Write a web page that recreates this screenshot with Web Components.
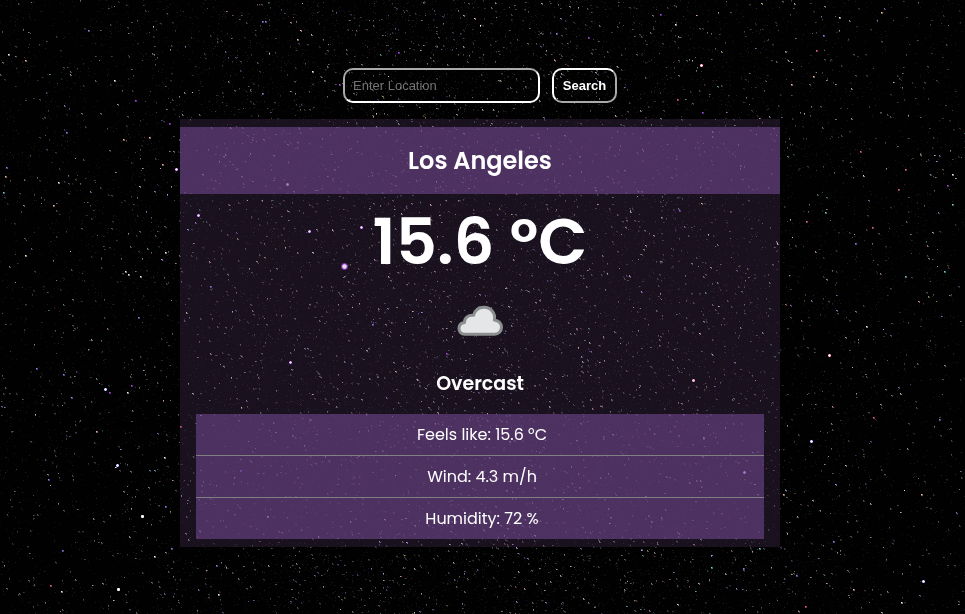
<!DOCTYPE html>
<html lang="en">
<head>
<meta charset="utf-8">
<meta name="viewport" content="width=device-width, initial-scale=1">
<title>Weather</title>
<style>
  html { background: #000; }
  body { margin: 0; font-family: Poppins, Inter, "Open Sans", sans-serif; color: #fff; }
</style>
</head>
<body>
<weather-app></weather-app>

<script>
// Night sky painted on a canvas that fills the window.
class StarField extends HTMLElement {
  constructor() {
    super();
    this.attachShadow({ mode: 'open' }).innerHTML = `
      <style>
        :host { display: block; position: fixed; inset: 0; z-index: -1; background: #010101; }
        canvas { display: block; width: 100%; height: 100%; }
      </style>
      <canvas aria-hidden="true"></canvas>`;
  }
  connectedCallback() {
    this.paint();
    addEventListener('resize', () => this.paint());
  }
  paint() {
    const canvas = this.shadowRoot.querySelector('canvas');
    const w = canvas.width = innerWidth, h = canvas.height = innerHeight;
    const ctx = canvas.getContext('2d');
    let seed = 71933;
    const rnd = () => {
      seed = (seed + 0x6D2B79F5) | 0;
      let t = Math.imul(seed ^ (seed >>> 15), 1 | seed);
      t = (t + Math.imul(t ^ (t >>> 7), 61 | t)) ^ t;
      return ((t ^ (t >>> 14)) >>> 0) / 4294967296;
    };
    const tints = ['255,255,255', '235,235,230', '170,175,255', '200,165,255', '150,210,215', '225,215,165', '255,190,180'];
    const scale = w * h / 592510;
    // The stars crowd towards the middle of the window.
    const place = () => {
      for (;;) {
        const x = rnd(), y = rnd();
        const d = (x - 0.5 + (y - 0.5) * -0.06) / 0.3;
        if (rnd() < 0.3 + 0.7 * Math.exp(-d * d)) return [Math.floor(x * w), Math.floor(y * h)];
      }
    };
    const layer = (count, low, high, power) => {
      for (let i = 0; i < count * scale; i++) {
        const [x, y] = place();
        const a = low + (high - low) * Math.pow(rnd(), power);
        const tint = tints[Math.floor(rnd() * tints.length)];
        ctx.fillStyle = `rgba(${tint},${a})`;
        ctx.fillRect(x, y, 1, 1);
        if (a > 0.2 && rnd() < 0.85) {
          ctx.fillStyle = `rgba(${tint},${a * 0.6})`;
          if (rnd() < 0.5) ctx.fillRect(x + 1, y, 1, 1);
          else ctx.fillRect(x, y + 1, 1, 1);
          if (rnd() < 0.5) ctx.fillRect(x + 1, y + 1, 1, 1);
        }
      }
    };
    layer(26000, 0.02, 0.14, 2);
    layer(4800, 0.1, 0.45, 1.6);
    layer(1900, 0.3, 0.75, 1.4);
    layer(120, 0.7, 1, 1);

    const white = '255,255,255', blue = '145,145,255', violet = '190,80,255', pink = '255,110,160', warm = '255,195,170', cyan = '120,220,230';
    const bright = [
      [88,30,1,blue],[8,54,1,white],[25,60,1,warm],[135,100,1,violet],[66,132,1,blue],[312,71,1,white],[114,80,1,white],
      [169,123,1,violet],[123,139,1,warm],[149,137,1,warm],[6,167,1,blue],[5,176,1,warm],[3,192,1,cyan],[162,164,1,warm],
      [176,169,2,violet],[58,182,1,white],[53,205,1,warm],[25,255,1,white],[165,252,1,white],[140,276,1,white],[128,274,1,white],
      [125,271,1,white],[262,21,1,blue],[265,21,1,blue],[262,93,1,blue],[297,39,1,warm],[287,184,2,pink],[198,215,2,violet],
      [309,231,2,violet],[210,286,1,blue],[344,266,3,violet],[361,227,2,violet],[660,14,1,violet],[675,24,1,white],[701,65,2,pink],
      [677,99,1,pink],[702,112,1,violet],[839,17,1,white],[881,12,1,warm],[823,35,1,blue],[813,76,1,warm],[791,84,1,warm],
      [816,50,1,pink],[860,151,1,pink],[855,243,1,blue],[905,169,1,pink],[947,185,1,violet],[806,221,1,pink],[872,227,1,pink],
      [898,189,1,pink],[952,174,1,white],[952,204,1,cyan],[944,271,1,cyan],[905,276,1,cyan],[825,212,1,cyan],[679,210,1,violet],
      [138,317,1,blue],[36,368,1,blue],[63,374,1,blue],[105,389,2,blue],[109,392,1,violet],[131,385,1,violet],[127,392,1,white],
      [96,431,1,warm],[117,465,2,blue],[48,479,1,blue],[71,397,1,blue],[164,457,1,white],[165,506,1,blue],[142,516,2,white],
      [118,589,2,white],[61,591,1,white],[62,550,1,blue],[154,556,1,white],[171,548,1,blue],[50,585,1,pink],[180,426,1,pink],
      [290,362,2,violet],[240,470,1,violet],[218,594,1,white],[310,419,1,violet],[216,565,1,blue],[267,516,1,white],
      [693,380,2,pink],[829,355,2,pink],[811,441,2,blue],[744,472,2,violet],[683,414,1,violet],[783,494,1,warm],[833,541,1,blue],
      [923,581,2,blue],[901,602,1,white],[853,589,1,warm],[939,419,1,blue],[873,417,1,pink],[805,606,1,pink],[759,548,1,cyan],
      [711,567,1,cyan],[743,568,1,blue],[796,575,1,blue],[866,326,1,white],[921,494,1,warm],[651,521,1,blue],[398,52,1,violet],
      [538,137,1,violet],[579,487,1,violet],[446,353,1,violet],[372,324,1,blue],[339,84,1,violet],[556,33,1,blue],[588,37,1,violet]
    ];
    for (const [px, py, r, tint] of bright) {
      const x = Math.round(px * w / 965), y = Math.round(py * h / 614);
      if (r === 1) {
        ctx.fillStyle = `rgba(${tint},.5)`;
        ctx.fillRect(x, y, 2, 2);
        ctx.fillStyle = `rgba(${tint},.9)`;
        ctx.fillRect(x, y, 1, 1);
      } else {
        const reach = r === 3 ? 4 : 2;
        const halo = ctx.createRadialGradient(x + 0.5, y + 0.5, 0, x + 0.5, y + 0.5, reach);
        halo.addColorStop(0, '#fff');
        halo.addColorStop(0.45, '#fff');
        halo.addColorStop(0.65, `rgba(${tint},.85)`);
        halo.addColorStop(1, `rgba(${tint},0)`);
        ctx.fillStyle = halo;
        ctx.fillRect(x - reach, y - reach, 2 * reach + 1, 2 * reach + 1);
      }
    }
  }
}
customElements.define('star-field', StarField);

class LocationSearch extends HTMLElement {
  constructor() {
    super();
    this.attachShadow({ mode: 'open' }).innerHTML = `
      <style>
        :host { display: block; }
        form { display: flex; justify-content: center; gap: 12px; }
        input, button {
          box-sizing: border-box; height: 35px; margin: 0; padding: 8px;
          font: 13px/15px "Liberation Sans", Arial, sans-serif; color: #fff;
          background: transparent; border: 2px solid #fff; border-radius: 10px;
        }
        input { width: 197px; border-color: #aaa #fff #fff #aaa; }
        input::placeholder { color: #757575; opacity: 1; }
        button { min-width: 65px; font-weight: bold; border-color: #fff #aaa #aaa #fff; cursor: pointer; }
      </style>
      <form>
        <input type="text" placeholder="Enter Location" aria-label="Enter Location">
        <button type="submit">Search</button>
      </form>`;
    this.shadowRoot.querySelector('form').addEventListener('submit', e => e.preventDefault());
  }
}
customElements.define('location-search', LocationSearch);

class CloudIcon extends HTMLElement {
  constructor() {
    super();
    this.attachShadow({ mode: 'open' }).innerHTML = `
      <style>
        :host { display: block; }
        svg { display: block; margin: 0 auto; }
      </style>
      <svg width="64" height="64" viewBox="0 0 64 64" role="img" aria-label="Cloud">
        <path d="M17 44.300C12.800 44.300 11 41.500 11 38.800C11 35.300 13.200 33 16.500 32.600C16.200 27.800 20.500 24.500 25.600 25.300C27.200 19.800 31.500 17.300 36 17.300C42.500 17.300 47.800 22.800 46.300 30C50.500 30.600 53.500 33.300 53.500 37.300C53.500 41.300 50.500 44.300 46.500 44.300Z" fill="#e4e6e7" stroke="#8c8f90" stroke-width="3" stroke-linejoin="round"/>
      </svg>`;
  }
}
customElements.define('cloud-icon', CloudIcon);

class WeatherDetail extends HTMLElement {
  constructor() {
    super();
    this.attachShadow({ mode: 'open' }).innerHTML = `
      <style>
        :host { display: block; padding: 8px 8px 8px 12px; font-size: 16px; line-height: 25px; text-align: center; }
        :host(:not(:last-child)) { border-bottom: 1px solid #808080; }
      </style>
      <slot></slot>`;
  }
}
customElements.define('weather-detail', WeatherDetail);

class WeatherCard extends HTMLElement {
  constructor() {
    super();
    this.attachShadow({ mode: 'open' }).innerHTML = `
      <style>
        :host {
          --panel: rgba(111, 71, 141, .6);
          display: block; box-sizing: border-box; width: 100%; max-width: 600px;
          padding: 8px 0; text-align: center; background: rgba(130, 85, 155, .2);
        }
        h1, h2, p { margin: 0; font-weight: 600; }
        h1 { padding: 16px; font-size: 24px; line-height: 35px; background: var(--panel); }
        .temperature { font-size: 64px; line-height: 96px; }
        h2 { padding: 16px 0; font-size: 19px; line-height: 28px; }
        .details { margin: 0 16px; background: var(--panel); }
      </style>
      <h1><slot name="city"></slot></h1>
      <p class="temperature"><slot name="temperature"></slot></p>
      <cloud-icon></cloud-icon>
      <h2><slot name="summary"></slot></h2>
      <div class="details"><slot></slot></div>`;
  }
}
customElements.define('weather-card', WeatherCard);

class WeatherApp extends HTMLElement {
  constructor() {
    super();
    this.attachShadow({ mode: 'open' }).innerHTML = `
      <style>
        :host { display: block; }
        main {
          display: flex; flex-direction: column; align-items: center; gap: 16px;
          padding: 68px 5px 16px 0;
        }
      </style>
      <star-field></star-field>
      <main>
        <location-search></location-search>
        <weather-card>
          <span slot="city">Los Angeles</span>
          <span slot="temperature">15.6 °C</span>
          <span slot="summary">Overcast</span>
          <weather-detail>Feels like: 15.6 °C</weather-detail>
          <weather-detail>Wind: 4.3 m/h</weather-detail>
          <weather-detail>Humidity: 72 %</weather-detail>
        </weather-card>
      </main>`;
  }
}
customElements.define('weather-app', WeatherApp);
</script>
</body>
</html>
